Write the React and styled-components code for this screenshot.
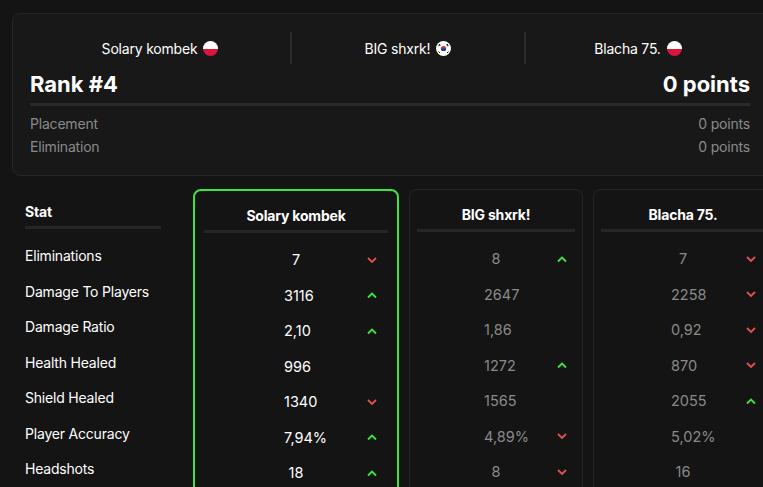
import React from "react";
import styled, { createGlobalStyle } from "styled-components";

const G = createGlobalStyle`
  html,body{margin:0;background:#141414;font-family:Inter,"Noto Sans",sans-serif;color:#fff;overflow:hidden;}
`;
const Page = styled.div`padding:13px 0 0 12px;width:763px;box-sizing:border-box;`;
const Card = styled.div`
  width:760px;box-sizing:border-box;background:#181818;border:1px solid #262626;border-radius:8px;
  padding:18px 21px 10px 17px;height:163px;
`;
const Names = styled.div`display:grid;grid-template-columns:260px 234px 1fr;`;
const Name = styled.div`
  display:flex;align-items:center;justify-content:center;gap:6px;font-size:14px;letter-spacing:-0.2px;height:32px;
  border-left:${p=>p.$first?"none":"2px solid #2a2a2a"};
`;
const Flag = styled.span`
  width:15px;height:15px;border-radius:50%;display:inline-block;
  background:${p=>p.$kr?"#fff":"linear-gradient(#fff 50%,#dc143c 50%)"};
  position:relative;
`;
const Rank = styled.div`display:flex;justify-content:space-between;font-size:22px;font-weight:700;margin-top:7px;padding-bottom:6px;border-bottom:3px solid #2a2a2a;`;
const Sub = styled.div`display:flex;justify-content:space-between;color:#8a8a8a;font-size:14px;letter-spacing:-0.2px;line-height:23px;margin-top:6px;`;
const SubRow = styled.div`display:flex;justify-content:space-between;color:#8a8a8a;font-size:14px;letter-spacing:-0.2px;line-height:23px;`;
const Table = styled.div`display:flex;margin-top:13px;margin-left:1px;gap:10px;`;
const StatCol = styled.div`width:148px;box-sizing:border-box;padding-left:12px;margin-right:22px;flex-shrink:0;`;
const Col = styled.div`
  width:${p=>p.$w}px;box-sizing:border-box;flex-shrink:0;border-radius:8px;height:320px;
  border:${p=>p.$hl?"2px solid #3ee43e":"1px solid #262626"};padding:0 ${p=>p.$hl?9:7}px;
`;
const Head = styled.div`
  font-size:14px;font-weight:700;letter-spacing:-0.2px;text-align:${p=>p.$left?"left":"center"};
  height:${p=>p.$left?40:42}px;box-sizing:border-box;padding-top:${p=>p.$left?14:16}px;
  border-bottom:3px solid #262626;margin-bottom:8px;
`;
const Label = styled.div`height:35.5px;display:flex;align-items:center;font-size:14px;letter-spacing:-0.2px;white-space:nowrap;padding-top:2px;box-sizing:border-box;`;
const Val = styled.div`
  height:35.5px;display:grid;grid-template-columns:1fr 24px 1fr;align-items:center;font-size:14.5px;
  color:${p=>p.$dim?"#8a8a8a":"#fff"};padding-top:2px;box-sizing:border-box;
`;
const Num = styled.span`grid-column:2;text-align:center;white-space:nowrap;`;
const Arr = styled.span`grid-column:3;justify-self:end;display:flex;margin-right:${p=>p.$mr}px;`;

const Arrow = ({up}) => (
  <svg width="12" height="8" viewBox="0 0 12 8">
    <path d={up?"M2 6.5 6 2.5 10 6.5":"M2 2 6 6 10 2"} fill="none" stroke={up?"#3ee43e":"#e0524f"} strokeWidth="1.8"/>
  </svg>
);

const stats=["Eliminations","Damage To Players","Damage Ratio","Health Healed","Shield Healed","Player Accuracy","Headshots"];
const cols=[
  {name:"Solary kombek",w:206,hl:true,mr:10,v:[["7","d"],["3116","u"],["2,10","u"],["996"],["1340","d"],["7,94%","u"],["18","u"]]},
  {name:"BIG shxrk!",w:174,mr:7,v:[["8","u"],["2647"],["1,86"],["1272","u"],["1565"],["4,89%","d"],["8","d"]]},
  {name:"Blacha 75.",w:180,mr:8,v:[["7","d"],["2258","d"],["0,92","d"],["870","d"],["2055","u"],["5,02%"],["16"]]},
];

const KR = () => (
  <svg width="15" height="15" viewBox="0 0 15 15" style={{position:"absolute",inset:0}}>
    <circle cx="7.5" cy="7.5" r="2.6" fill="#cd2e3a"/>
    <path d="M4.9 7.5a2.6 2.6 0 0 0 5.2 0" fill="#0047a0"/>
    <g stroke="#000" strokeWidth="0.9"><path d="M2.5 4.5l1.5-1.5M3 5.3l1.6-1.6M11 3l1.5 1.5M10.4 3.6l1.6 1.6M2.5 10.5 4 12M11 12l1.5-1.5"/></g>
  </svg>
);

export default function App(){
  return <Page><G/>
    <Card>
      <Names>
        <Name $first>Solary kombek <Flag/></Name>
        <Name>BIG shxrk! <Flag $kr><KR/></Flag></Name>
        <Name>Blacha 75. <Flag/></Name>
      </Names>
      <Rank><span>Rank #4</span><span>0 points</span></Rank>
      <Sub><span>Placement</span><span>0 points</span></Sub>
      <SubRow><span>Elimination</span><span>0 points</span></SubRow>
    </Card>
    <Table>
      <StatCol>
        <Head $left>Stat</Head>
        {stats.map(s=><Label key={s}>{s}</Label>)}
      </StatCol>
      {cols.map(c=>(
        <Col key={c.name} $w={c.w} $hl={c.hl}>
          <Head>{c.name}</Head>
          {c.v.map(([n,a],i)=>(
            <Val key={i} $dim={!c.hl}><Num>{n}</Num>{a&&<Arr $mr={c.mr}><Arrow up={a==="u"}/></Arr>}</Val>
          ))}
        </Col>
      ))}
    </Table>
  </Page>;
}
